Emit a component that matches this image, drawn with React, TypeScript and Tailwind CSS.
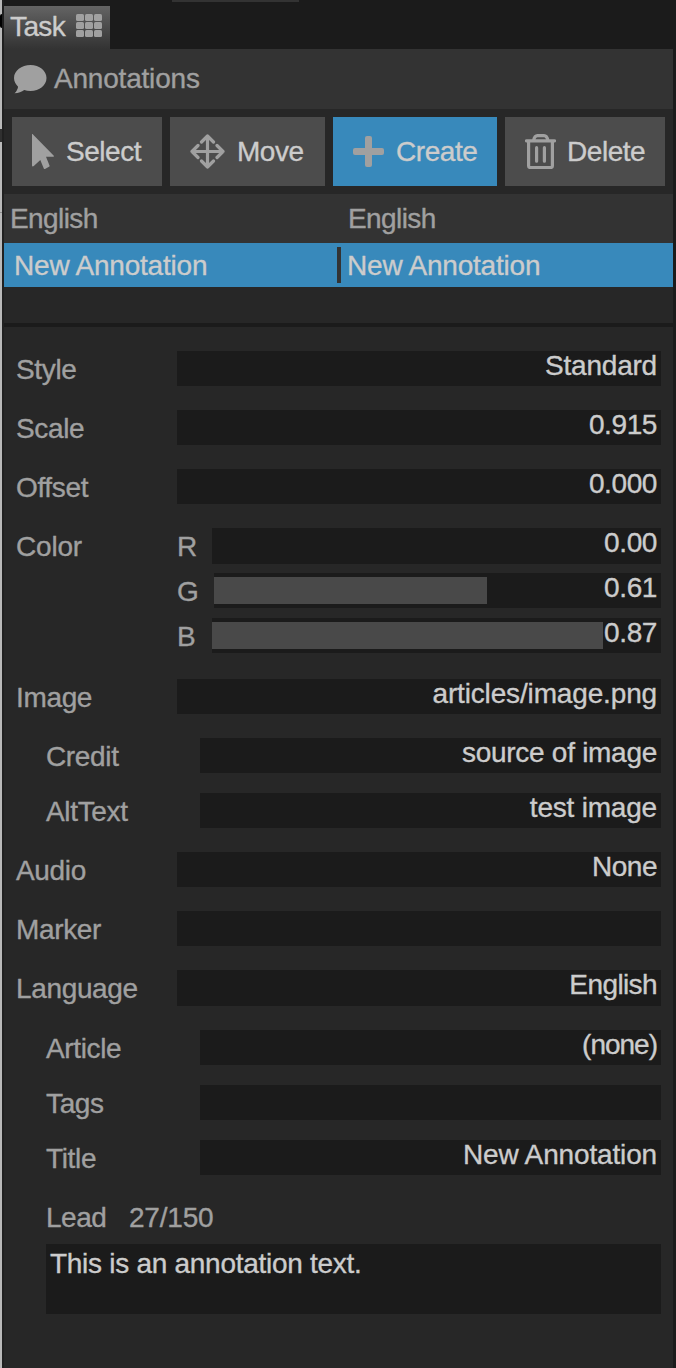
import type { ReactNode } from "react";

function Text({ children, className = "" }: { children: ReactNode; className?: string }) {
  return <span className={`block whitespace-pre leading-[32px] ${className}`}>{children}</span>;
}

function Button({ label, icon, className }: { label: string; icon: ReactNode; className: string }) {
  return (
    <button className={`flex h-[69px] items-center tracking-[-0.45px] text-[#cccccc] ${className}`}>
      {icon}
      <Text>{label}</Text>
    </button>
  );
}

function Row({
  label,
  value,
  indent = false,
  className,
  valueClass = "",
}: {
  label: string;
  value: string;
  indent?: boolean;
  className: string;
  valueClass?: string;
}) {
  return (
    <div className={`flex shrink-0 ${className}`}>
      <Text className={`pt-[3px] tracking-[-0.35px] ${indent ? "w-[196px] pl-[42px]" : "w-[173px] pl-3"}`}>{label}</Text>
      <div className="mr-3 h-full flex-1 bg-[#1b1b1b] pr-1 text-right text-[#cccccc]">
        <Text className={`-mt-px ${valueClass}`}>{value}</Text>
      </div>
    </div>
  );
}

function Channel({
  label,
  name,
  value,
  track,
  fill,
}: {
  label?: string;
  name: string;
  value: string;
  track: string;
  fill: string;
}) {
  return (
    <div className="flex h-[35px]">
      <Text className="w-[173px] pt-[3px] pl-3">{label}</Text>
      <Text className="w-[35px] pt-[3px]">{name}</Text>
      <div className={`mr-3 flex flex-1 justify-between bg-[#1b1b1b] pr-1 text-[#cccccc] ${track}`}>
        <div className={`mt-1 h-[27px] bg-[#494949] ${fill}`} />
        <Text className="-mt-px tracking-[-0.4px]">{value}</Text>
      </div>
    </div>
  );
}

export default function App() {
  return (
    <div className="flex h-[1368px] w-[676px] overflow-hidden bg-[#1b1b1b] font-['Liberation_Sans',Arial,sans-serif] text-[28px] tracking-[-0.2px] text-[#a0a0a0] [-webkit-text-stroke:0.35px_currentColor]">
      <div className="flex w-1 shrink-0 flex-col border-r-2 border-[#202020] bg-[#b9b9b9]">
        <div className="mt-[14px] h-[14px] rounded-l-sm bg-black" />
        <div className="mt-[101px] h-[13px] bg-[#303030]" />
        <div className="mt-[70px] h-px bg-[#8c8c8c]" />
      </div>
      <div className="flex w-[669px] shrink-0 flex-col bg-[#272727]">
        <div className="flex h-[49px] shrink-0 items-end bg-[#1b1b1b]">
          <div className="flex h-[43px] w-[106px] items-center bg-linear-to-b from-[#646464] to-[#333333] pl-[6px] text-[#cccccc]">
            <Text className="-mt-[2px] w-[66px] tracking-[-0.6px]">Task</Text>
            <svg width="26" height="23" viewBox="0 0 26 23" className="-mt-[5px] fill-[#a0a0a0]">
              {[0, 9, 18].map((x) =>
                [0, 8, 16].map((y) => <rect key={`${x}-${y}`} x={x} y={y} width="8" height="7" rx="1.5" />),
              )}
            </svg>
          </div>
          <div className="ml-[62px] h-[2px] w-[127px] self-start bg-[#333333]" />
        </div>

        <div className="flex h-[60px] shrink-0 items-center bg-[#333333] pl-[10px]">
          <svg width="33" height="30" viewBox="0 0 33 30" className="mr-[7px] fill-[#a0a0a0]">
            <path d="M16.5 1C25.5 1 32.5 6.8 32.5 14S25.5 27 16.5 27c-2.3 0-4.400-.4-6.300-1C7.800 28 4.500 29.200.5 29.200c1.900-1.600 3.300-4.200 3.600-6.500C1.700 20.400 0 17.400 0 14 0 6.800 7.500 1 16.500 1Z" />
          </svg>
          <Text>Annotations</Text>
        </div>

        <div className="flex h-[85px] shrink-0 gap-2 px-2 pt-2">
          <Button
            label="Select"
            className="w-[150px] bg-[#4c4c4c] pl-5"
            icon={
              <svg width="22" height="35" viewBox="0 0 22 35" className="mr-3 fill-[#a0a0a0]">
                <path d="M0 .5C0 0 .6 0 1 .400L21.800 21.800c.4.5.2 1-.5 1H14l3.500 8.800c.2.6 0 1-.5 1.200L13 35c-.6.2-1 0-1.200-.5L8.300 26l-6.500 6c-.8.8-1.800.5-1.800-.5Z" />
              </svg>
            }
          />
          <Button
            label="Move"
            className="w-[155px] bg-[#4c4c4c] pl-5 tracking-[-0.1px]"
            icon={
              <svg width="35" height="35" viewBox="0 0 35 35" fill="none" className="mr-3 stroke-[#a0a0a0]">
                <path
                  d="M17.500 2v31M2 17.500h31M11.500 8l6-6 6 6M11.500 27l6 6 6-6M8 11.500l-6 6 6 6M27 11.500l6 6-6 6"
                  strokeWidth="3.200"
                  strokeLinecap="round"
                  strokeLinejoin="round"
                />
              </svg>
            }
          />
          <Button
            label="Create"
            className="w-[164px] bg-[#3889bb] pl-5"
            icon={
              <svg width="31" height="31" viewBox="0 0 31 31" className="mr-3 fill-[#a0a0a0]">
                <rect x="12" y="0" width="7" height="31" rx="2" />
                <rect x="0" y="12" width="31" height="7" rx="2" />
              </svg>
            }
          />
          <Button
            label="Delete"
            className="w-[160px] bg-[#4c4c4c] pl-5"
            icon={
              <svg width="31" height="35" viewBox="0 0 31 35" fill="none" className="mr-[11px] stroke-[#a0a0a0]">
                <path
                  d="M1.500 6.800h28M8.500 6.500c.7-3.300 2.200-4.900 4-4.900h6.500c1.800 0 3.300 1.600 4 4.900M3.600 7.500V32c0 1 .5 1.500 1.500 1.500h20.800c1 0 1.500-.5 1.500-1.500V7.500"
                  strokeWidth="3.200"
                  strokeLinecap="round"
                />
                <path d="M11.600 13.700v13.500M19.400 13.700v13.500" strokeWidth="3.200" strokeLinecap="round" />
              </svg>
            }
          />
        </div>

        <div className="flex h-[49px] shrink-0 items-center bg-[#333333] pl-[6px] tracking-[-0.6px]">
          <Text className="w-[338px]">English</Text>
          <Text>English</Text>
        </div>
        <div className="flex h-[44px] shrink-0 items-center bg-[#3889bb] pl-[10px] text-[#cccccc]">
          <Text className="w-[323px] pt-[2px]">New Annotation</Text>
          <div className="h-9 w-1 bg-[#333333]" />
          <Text className="ml-[6px] pt-[2px]">New Annotation</Text>
        </div>
        <div className="mt-9 h-1 shrink-0 bg-[#1b1b1b]" />

        <Row label="Style" value="Standard" className="mt-6 h-[35px]" />
        <Row label="Scale" value="0.915" className="mt-6 h-[35px]" valueClass="tracking-[-0.4px]" />
        <Row label="Offset" value="0.000" className="mt-6 h-[35px]" valueClass="tracking-[-0.4px]" />
        <div className="mt-6 flex shrink-0 flex-col gap-[10px]">
          <Channel label="Color" name="R" value="0.00" track="h-9" fill="w-0" />
          <Channel name="G" value="0.61" track="ml-[2px]" fill="w-[273px]" />
          <Channel name="B" value="0.87" track="" fill="w-[391px]" />
        </div>
        <Row label="Image" value="articles/image.png" className="mt-[26px] h-[35px]" valueClass="tracking-[-0.15px]" />
        <Row label="Credit" value="source of image" indent className="mt-6 h-[35px]" valueClass="tracking-[-0.28px]" />
        <Row label="AltText" value="test image" indent className="mt-5 h-[35px]" />
        <Row label="Audio" value="None" className="mt-6 h-[35px]" valueClass="tracking-[-0.5px]" />
        <Row label="Marker" value="" className="mt-6 h-[35px]" />
        <Row label="Language" value="English" className="mt-6 h-9" valueClass="tracking-[-0.6px]" />
        <Row label="Article" value="(none)" indent className="mt-6 h-[35px]" valueClass="tracking-[-1px]" />
        <Row label="Tags" value="" indent className="mt-5 h-[35px]" />
        <Row label="Title" value="New Annotation" indent className="mt-5 h-[35px]" valueClass="tracking-[-0.15px]" />
        <div className="mt-[27px] flex shrink-0 pl-[42px]">
          <Text className="w-[83px] tracking-[-0.5px]">Lead</Text>
          <Text>27/150</Text>
        </div>
        <div className="mt-[10px] mr-3 ml-[42px] h-[70px] shrink-0 bg-[#1b1b1b] pt-1 pl-1 text-[#cccccc]">
          <Text className="tracking-[-0.28px]">This is an annotation text.</Text>
        </div>
      </div>
    </div>
  );
}
